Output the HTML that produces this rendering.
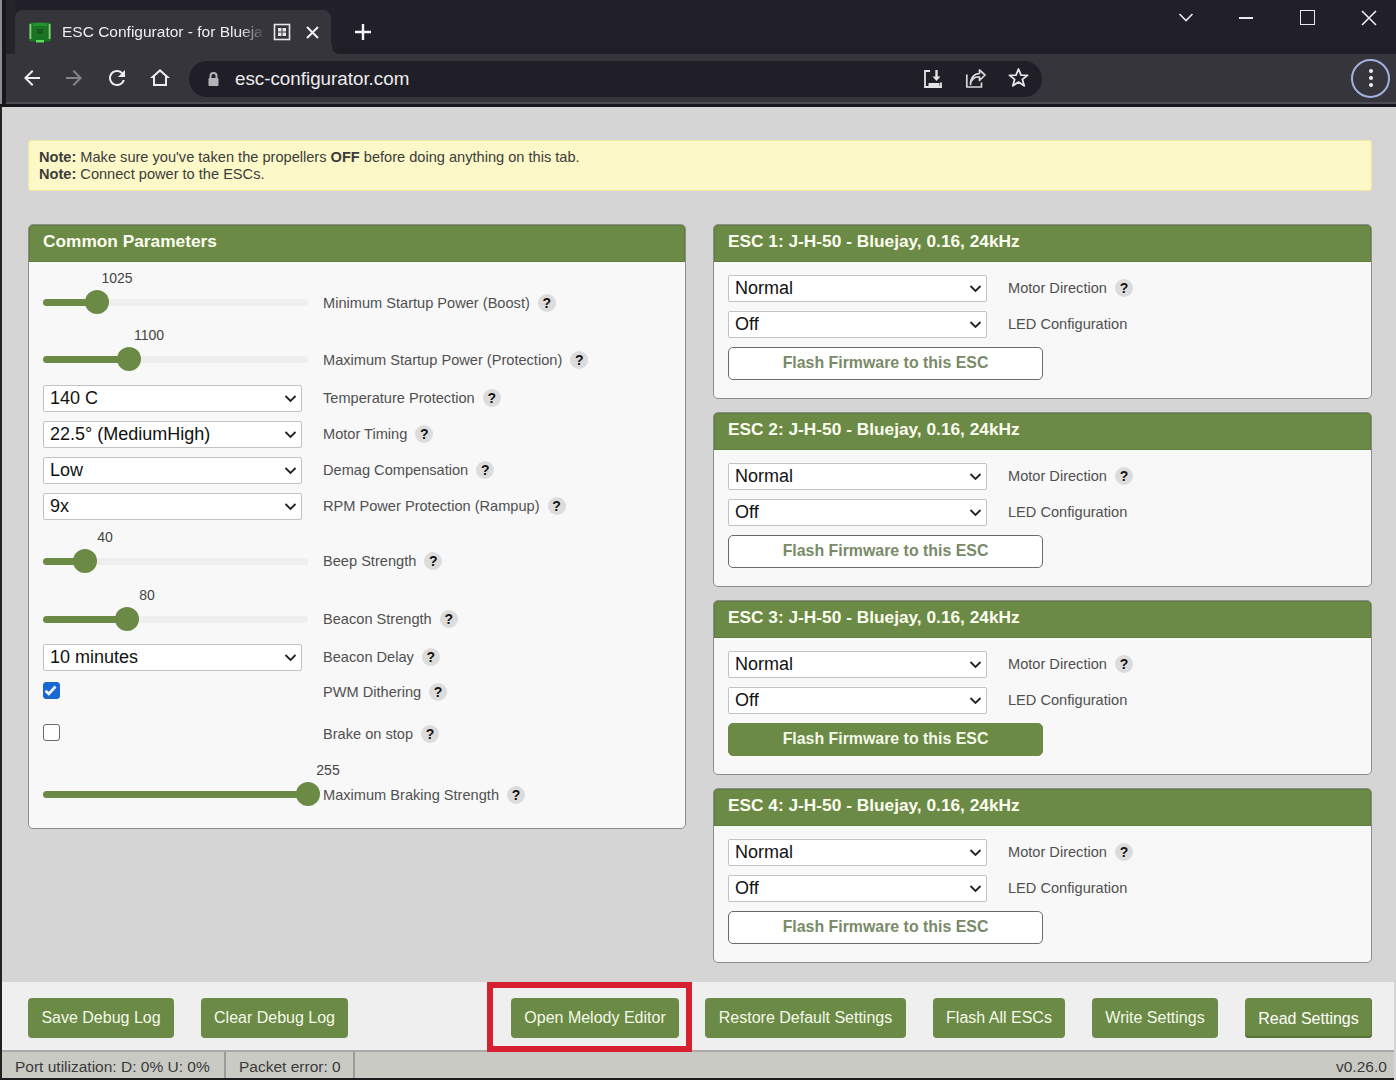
<!DOCTYPE html>
<html><head><meta charset="utf-8">
<style>
*{box-sizing:border-box;margin:0;padding:0}
html,body{width:1396px;height:1080px;overflow:hidden;background:#d5d5d5;font-family:"Liberation Sans",sans-serif}
.a{position:absolute}
#tabstrip{left:0;top:0;width:1396px;height:54px;background:#211f2a}
#tab{left:15px;top:10px;width:316px;height:44px;background:#36353c;border-radius:8px 8px 0 0}
#toolbar{left:0;top:54px;width:1396px;height:49px;background:#36353c}
#tbline{left:0;top:102px;width:1396px;height:2px;background:#4c4b53}
#tbline2{left:0;top:104px;width:1396px;height:3px;background:#17161b}
#omni{left:189px;top:61px;width:853px;height:36px;background:#201f28;border-radius:18px}
.w{color:#e8e8ea}
#note{left:28px;top:140px;width:1344px;height:51px;background:#fcf8c8;border:1px solid #efe7a2;border-radius:3px;font-size:14.6px;color:#3c3c3c;padding:8px 0 0 10px;line-height:17px}
.panel{background:#f8f8f8;border:1px solid #8c8c8c;border-radius:5px;overflow:hidden}
.ph{position:absolute;left:0;top:0;right:0;height:37px;background:#6b8a45;box-shadow:inset 0 0 0 1px #5f7d3c;color:#fbfdf0;font-weight:bold;font-size:17.3px;padding:5.5px 0 0 14px;white-space:nowrap}
.sel{position:absolute;height:27px;background:#fff;border:1.3px solid #c2c2c2;border-radius:2px;font-size:18px;color:#111;padding:0 0 0 6px;line-height:24px;white-space:nowrap}
.sel svg{position:absolute;right:4px;top:8px}
.lbl{position:absolute;font-size:14.6px;color:#505050;white-space:nowrap;line-height:18px}
.help{display:inline-block;width:18px;height:18px;border-radius:9px;background:#dcdcdc;color:#111;font-weight:bold;font-size:14px;text-align:center;line-height:18px;margin-left:8px;vertical-align:top}
.val{position:absolute;font-size:14px;color:#444;line-height:16px;white-space:nowrap}
.track{position:absolute;left:43px;width:265px;height:7px;border-radius:4px;background:#eeeeee}
.fill{position:absolute;left:0;top:0;height:7px;border-radius:4px;background:#6b8a45}
.thumb{position:absolute;width:24px;height:24px;border-radius:12px;background:#6b8a45;top:-8.5px}
.cb{position:absolute;width:17px;height:17px;border:1.6px solid #6a6a6a;border-radius:3px;background:#fff}
.cb.on{background:#1868d0;border-color:#1868d0}
.cb svg{position:absolute;left:-1.5px;top:-1.5px}
.btn{position:absolute;top:998px;height:40px;background:#6b8a45;color:#f4f9ea;border-radius:4px;font-size:16px;text-align:center;line-height:40px;white-space:nowrap}
.fbtn{position:absolute;left:14px;width:315px;height:33px;border:1.5px solid #6a6a6a;border-radius:5px;background:#fff;color:#7a8a68;font-weight:bold;font-size:15.9px;text-align:center;line-height:30px;white-space:nowrap}
.fbtn.on{background:#6b8a45;color:#f4f9ea;border-color:#6b8a45}
#bottombar{left:2px;top:982px;width:1392px;height:68px;background:#efefef}
#status{left:2px;top:1050px;width:1392px;height:30px;background:#cacac5;font-size:15.5px;color:#3a3a3a;border-top:2px solid #abaaa6;border-bottom:2px solid #1c1c1c}
</style></head>
<body>
<div class="a" id="tabstrip"></div>
<div class="a" style="left:0;top:48px;width:1396px;height:6px;background:#1f1e26"></div>
<div class="a" id="tab"></div>
<svg class="a" style="left:7px;top:44px" width="10" height="10"><path d="M0 10 Q8 10 8 2 L8 0 L10 0 L10 10 Z" fill="#36353c"/></svg>
<svg class="a" style="left:330px;top:44px" width="10" height="10"><path d="M10 10 Q2 10 2 2 L2 0 L0 0 L0 10 Z" fill="#36353c"/></svg>
<div class="a" id="toolbar"></div>
<div class="a" id="tbline"></div>
<div class="a" id="tbline2"></div>
<div class="a" style="left:0;top:0;width:2px;height:104px;background:#8d8d92"></div>
<div class="a" style="left:2px;top:0;width:4px;height:104px;background:#18171c"></div>
<div class="a" style="left:6px;top:0;width:9px;height:54px;background:#25242b"></div>
<div class="a" id="omni"></div>
<svg class="a" style="left:28px;top:21px" width="24" height="24" viewBox="0 0 24 24">
 <rect x="1" y="1.5" width="22" height="19" rx="2" fill="#1b7424"/>
 <rect x="1.5" y="3" width="1.8" height="15" fill="#8ccc78"/><rect x="20.7" y="3" width="1.8" height="15" fill="#8ccc78"/>
 <rect x="5" y="2" width="14" height="3" fill="#23922c"/>
 <rect x="9" y="8" width="6" height="5" fill="#145a1a"/>
 <rect x="8" y="19" width="8" height="2.5" fill="#5ae05a"/>
</svg>
<div class="a" style="left:62px;top:23px;font-size:15.5px;white-space:nowrap;width:203px;overflow:hidden;color:#ededf0;-webkit-mask-image:linear-gradient(90deg,#000 178px,transparent 203px)">ESC Configurator - for Bluejay</div>
<svg class="a" style="left:273px;top:23px" width="18" height="18" viewBox="0 0 18 18" fill="none" stroke="#e6e6e8">
 <rect x="1.5" y="1.5" width="15" height="15" stroke-width="1.6"/>
 <path d="M5 5h3.5v3.5H5zM9.5 5H13v3.5H9.5zM5 9.5h3.5V13H5zM9.5 9.5H13V13H9.5z" fill="#e6e6e8" stroke="none"/>
</svg>
<svg class="a" style="left:306px;top:26px" width="13" height="13" viewBox="0 0 13 13"><path d="M1 1L12 12M12 1L1 12" stroke="#f0f0f2" stroke-width="2"/></svg>
<svg class="a" style="left:354px;top:23px" width="18" height="18" viewBox="0 0 18 18"><path d="M9 1V17M1 9H17" stroke="#f4f4f6" stroke-width="2.4"/></svg>
<svg class="a" style="left:1178px;top:12px" width="16" height="10" viewBox="0 0 16 10"><path d="M1.5 2L8 8.5L14.5 2" fill="none" stroke="#e8e8ea" stroke-width="1.6"/></svg>
<div class="a" style="left:1239px;top:17px;width:14px;height:2px;background:#e8e8ea"></div>
<div class="a" style="left:1300px;top:10px;width:15px;height:15px;border:1.6px solid #e8e8ea"></div>
<svg class="a" style="left:1361px;top:10px" width="16" height="16" viewBox="0 0 16 16"><path d="M1 1L15 15M15 1L1 15" stroke="#ececee" stroke-width="1.6"/></svg>
<svg class="a" style="left:20px;top:66px" width="24" height="24" viewBox="0 0 24 24"><path d="M20 11H7.83l5.59-5.59L12 4l-8 8 8 8 1.41-1.41L7.83 13H20v-2z" fill="#ededef"/></svg>
<svg class="a" style="left:62px;top:66px" width="24" height="24" viewBox="0 0 24 24"><path d="M12 4l-1.41 1.41L16.17 11H4v2h12.17l-5.58 5.59L12 20l8-8z" fill="#85848a"/></svg>
<svg class="a" style="left:105px;top:66px" width="24" height="24" viewBox="0 0 24 24"><path d="M17.65 6.35A7.958 7.958 0 0 0 12 4c-4.42 0-7.99 3.58-7.99 8s3.57 8 7.99 8c3.73 0 6.840-2.55 7.73-6h-2.08A5.990 5.990 0 0 1 12 18c-3.310 0-6-2.690-6-6s2.690-6 6-6c1.660 0 3.140.690 4.220 1.780L13 11h7V4l-2.350 2.350z" fill="#ededef"/></svg>
<svg class="a" style="left:148px;top:66px" width="24" height="24" viewBox="0 0 24 24"><path d="M12 5.69l5 4.5V18H7v-7.81l5-4.5M12 3L2 12h3v8h14v-8h3L12 3z" fill="#ededef"/></svg>
<svg class="a" style="left:206px;top:71px" width="15" height="16" viewBox="0 0 15 16"><path d="M4.5 7V5A3 3 0 0 1 10.5 5V7" fill="none" stroke="#b5b5b8" stroke-width="2"/><rect x="2.5" y="7" width="10" height="8" rx="1" fill="#b5b5b8"/></svg>
<div class="a" style="left:235px;top:68px;font-size:18.8px;white-space:nowrap;color:#ececee">esc-configurator.com</div>
<svg class="a" style="left:922px;top:68px" width="22" height="21" viewBox="0 0 22 21" fill="none" stroke="#e4e4e6" stroke-width="1.8"><path d="M8 3H3V19H19V14.5"/><path d="M14.5 2V10" stroke-width="2.4"/><path d="M10.5 8.5H18.5L14.5 13Z" fill="#e4e4e6" stroke="none"/><rect x="6.5" y="15" width="11" height="4" fill="#e4e4e6" stroke="none"/></svg>
<svg class="a" style="left:965px;top:68px" width="22" height="21" viewBox="0 0 22 21" fill="none" stroke="#d8d8da" stroke-width="1.7" stroke-linejoin="round"><path d="M1.8 6.5V19H16.5V14.5"/><path d="M5.5 16.5C6 11 10 8.5 14.5 9V12.5L20 7L14.5 2V5.5C9.5 5.5 5.5 9.5 5.5 16.5Z"/></svg>
<svg class="a" style="left:1008px;top:67px" width="21" height="21" viewBox="0 0 21 21"><path d="M10.5 2L13 8.2L19.5 8.4L14.4 12.4L16.2 18.8L10.5 15.1L4.8 18.8L6.6 12.4L1.5 8.4L8 8.2Z" fill="none" stroke="#e6e6e8" stroke-width="1.8" stroke-linejoin="round"/></svg>
<div class="a" style="left:1351px;top:59px;width:39px;height:39px;border:2px solid #a3b1e0;border-radius:50%"></div>
<div class="a" style="left:1368.5px;top:69px;width:4px;height:4px;border-radius:2px;background:#f0f0f2;box-shadow:0 7px 0 #f0f0f2,0 14px 0 #f0f0f2"></div>
<div class="a" style="left:0;top:106px;width:2px;height:974px;background:#222"></div>
<div class="a" id="note"><b>Note:</b> Make sure you've taken the propellers <b>OFF</b> before doing anything on this tab.<br><b>Note:</b> Connect power to the ESCs.</div>
<div class="a panel" style="left:28px;top:224px;width:658px;height:605px"><div class="ph">Common Parameters</div></div>
<div class="a" id="bottombar"></div>
<div class="a" id="status"><span class="a" style="left:13px;top:6px">Port utilization: D: 0% U: 0%</span><span class="a" style="left:222px;top:0;width:1.5px;height:26px;background:#9a9a96"></span><span class="a" style="left:237px;top:6px">Packet error: 0</span><span class="a" style="left:351px;top:0;width:1.5px;height:26px;background:#9a9a96"></span><span class="a" style="left:1334px;top:6px">v0.26.0</span></div>
<div class="a" style="left:487px;top:982px;width:205px;height:70px;border:6px solid #d42030"></div>
<div class="track" style="top:298.5px"><div class="fill" style="width:54px"></div><div class="thumb" style="left:42px"></div></div><div class="val" style="left:117px;top:270px;transform:translateX(-50%)">1025</div>
<div class="lbl" style="left:323px;top:294px">Minimum Startup Power (Boost)<span class="help">?</span></div>
<div class="track" style="top:355.5px"><div class="fill" style="width:86px"></div><div class="thumb" style="left:74px"></div></div><div class="val" style="left:149px;top:327px;transform:translateX(-50%)">1100</div>
<div class="lbl" style="left:323px;top:351px">Maximum Startup Power (Protection)<span class="help">?</span></div>
<div class="sel" style="left:43px;top:385px;width:259px">140 C<svg width="13" height="9" viewBox="0 0 13 9"><path d="M1.5 2 L6.5 7 L11.5 2" fill="none" stroke="#222" stroke-width="1.8"/></svg></div>
<div class="lbl" style="left:323px;top:389px">Temperature Protection<span class="help">?</span></div>
<div class="sel" style="left:43px;top:421px;width:259px">22.5° (MediumHigh)<svg width="13" height="9" viewBox="0 0 13 9"><path d="M1.5 2 L6.5 7 L11.5 2" fill="none" stroke="#222" stroke-width="1.8"/></svg></div>
<div class="lbl" style="left:323px;top:425px">Motor Timing<span class="help">?</span></div>
<div class="sel" style="left:43px;top:457px;width:259px">Low<svg width="13" height="9" viewBox="0 0 13 9"><path d="M1.5 2 L6.5 7 L11.5 2" fill="none" stroke="#222" stroke-width="1.8"/></svg></div>
<div class="lbl" style="left:323px;top:461px">Demag Compensation<span class="help">?</span></div>
<div class="sel" style="left:43px;top:493px;width:259px">9x<svg width="13" height="9" viewBox="0 0 13 9"><path d="M1.5 2 L6.5 7 L11.5 2" fill="none" stroke="#222" stroke-width="1.8"/></svg></div>
<div class="lbl" style="left:323px;top:497px">RPM Power Protection (Rampup)<span class="help">?</span></div>
<div class="track" style="top:557.5px"><div class="fill" style="width:42px"></div><div class="thumb" style="left:30px"></div></div><div class="val" style="left:105px;top:529px;transform:translateX(-50%)">40</div>
<div class="lbl" style="left:323px;top:552px">Beep Strength<span class="help">?</span></div>
<div class="track" style="top:615.5px"><div class="fill" style="width:84px"></div><div class="thumb" style="left:72px"></div></div><div class="val" style="left:147px;top:587px;transform:translateX(-50%)">80</div>
<div class="lbl" style="left:323px;top:610px">Beacon Strength<span class="help">?</span></div>
<div class="sel" style="left:43px;top:644px;width:259px">10 minutes<svg width="13" height="9" viewBox="0 0 13 9"><path d="M1.5 2 L6.5 7 L11.5 2" fill="none" stroke="#222" stroke-width="1.8"/></svg></div>
<div class="lbl" style="left:323px;top:648px">Beacon Delay<span class="help">?</span></div>
<div class="cb on" style="left:42.5px;top:682px"><svg width="17" height="17" viewBox="0 0 17 17"><path d="M3.5 8.8 L6.8 11.8 L13.5 4.5" fill="none" stroke="#f4fbff" stroke-width="2.7"/></svg></div>
<div class="lbl" style="left:323px;top:683px">PWM Dithering<span class="help">?</span></div>
<div class="cb" style="left:43px;top:724px"></div>
<div class="lbl" style="left:323px;top:725px">Brake on stop<span class="help">?</span></div>
<div class="track" style="top:790.5px"><div class="fill" style="width:265px"></div><div class="thumb" style="left:253px"></div></div><div class="val" style="left:328px;top:762px;transform:translateX(-50%)">255</div>
<div class="lbl" style="left:323px;top:786px">Maximum Braking Strength<span class="help">?</span></div>
<div class="a panel" style="left:713px;top:224px;width:659px;height:175px"><div class="ph">ESC 1: J-H-50 - Bluejay, 0.16, 24kHz</div><div class="fbtn" style="top:122px">Flash Firmware to this ESC</div></div>
<div class="sel" style="left:728px;top:275px;width:259px">Normal<svg width="13" height="9" viewBox="0 0 13 9"><path d="M1.5 2 L6.5 7 L11.5 2" fill="none" stroke="#222" stroke-width="1.8"/></svg></div>
<div class="lbl" style="left:1008px;top:279px">Motor Direction<span class="help">?</span></div>
<div class="sel" style="left:728px;top:311px;width:259px">Off<svg width="13" height="9" viewBox="0 0 13 9"><path d="M1.5 2 L6.5 7 L11.5 2" fill="none" stroke="#222" stroke-width="1.8"/></svg></div>
<div class="lbl" style="left:1008px;top:315px">LED Configuration</div>
<div class="a panel" style="left:713px;top:412px;width:659px;height:175px"><div class="ph">ESC 2: J-H-50 - Bluejay, 0.16, 24kHz</div><div class="fbtn" style="top:122px">Flash Firmware to this ESC</div></div>
<div class="sel" style="left:728px;top:463px;width:259px">Normal<svg width="13" height="9" viewBox="0 0 13 9"><path d="M1.5 2 L6.5 7 L11.5 2" fill="none" stroke="#222" stroke-width="1.8"/></svg></div>
<div class="lbl" style="left:1008px;top:467px">Motor Direction<span class="help">?</span></div>
<div class="sel" style="left:728px;top:499px;width:259px">Off<svg width="13" height="9" viewBox="0 0 13 9"><path d="M1.5 2 L6.5 7 L11.5 2" fill="none" stroke="#222" stroke-width="1.8"/></svg></div>
<div class="lbl" style="left:1008px;top:503px">LED Configuration</div>
<div class="a panel" style="left:713px;top:600px;width:659px;height:175px"><div class="ph">ESC 3: J-H-50 - Bluejay, 0.16, 24kHz</div><div class="fbtn on" style="top:122px">Flash Firmware to this ESC</div></div>
<div class="sel" style="left:728px;top:651px;width:259px">Normal<svg width="13" height="9" viewBox="0 0 13 9"><path d="M1.5 2 L6.5 7 L11.5 2" fill="none" stroke="#222" stroke-width="1.8"/></svg></div>
<div class="lbl" style="left:1008px;top:655px">Motor Direction<span class="help">?</span></div>
<div class="sel" style="left:728px;top:687px;width:259px">Off<svg width="13" height="9" viewBox="0 0 13 9"><path d="M1.5 2 L6.5 7 L11.5 2" fill="none" stroke="#222" stroke-width="1.8"/></svg></div>
<div class="lbl" style="left:1008px;top:691px">LED Configuration</div>
<div class="a panel" style="left:713px;top:788px;width:659px;height:175px"><div class="ph">ESC 4: J-H-50 - Bluejay, 0.16, 24kHz</div><div class="fbtn" style="top:122px">Flash Firmware to this ESC</div></div>
<div class="sel" style="left:728px;top:839px;width:259px">Normal<svg width="13" height="9" viewBox="0 0 13 9"><path d="M1.5 2 L6.5 7 L11.5 2" fill="none" stroke="#222" stroke-width="1.8"/></svg></div>
<div class="lbl" style="left:1008px;top:843px">Motor Direction<span class="help">?</span></div>
<div class="sel" style="left:728px;top:875px;width:259px">Off<svg width="13" height="9" viewBox="0 0 13 9"><path d="M1.5 2 L6.5 7 L11.5 2" fill="none" stroke="#222" stroke-width="1.8"/></svg></div>
<div class="lbl" style="left:1008px;top:879px">LED Configuration</div>
<div class="btn" style="left:28px;width:146px">Save Debug Log</div>
<div class="btn" style="left:201px;width:147px">Clear Debug Log</div>
<div class="btn" style="left:511px;width:168px">Open Melody Editor</div>
<div class="btn" style="left:705px;width:201px">Restore Default Settings</div>
<div class="btn" style="left:933px;width:132px">Flash All ESCs</div>
<div class="btn" style="left:1092px;width:126px">Write Settings</div>
<div class="btn" style="left:1245px;width:127px;color:#fff;box-shadow:inset 0 -2px 0 #587434, inset -1px 0 0 #5f7b3a;line-height:41px">Read Settings</div>
</body></html>
